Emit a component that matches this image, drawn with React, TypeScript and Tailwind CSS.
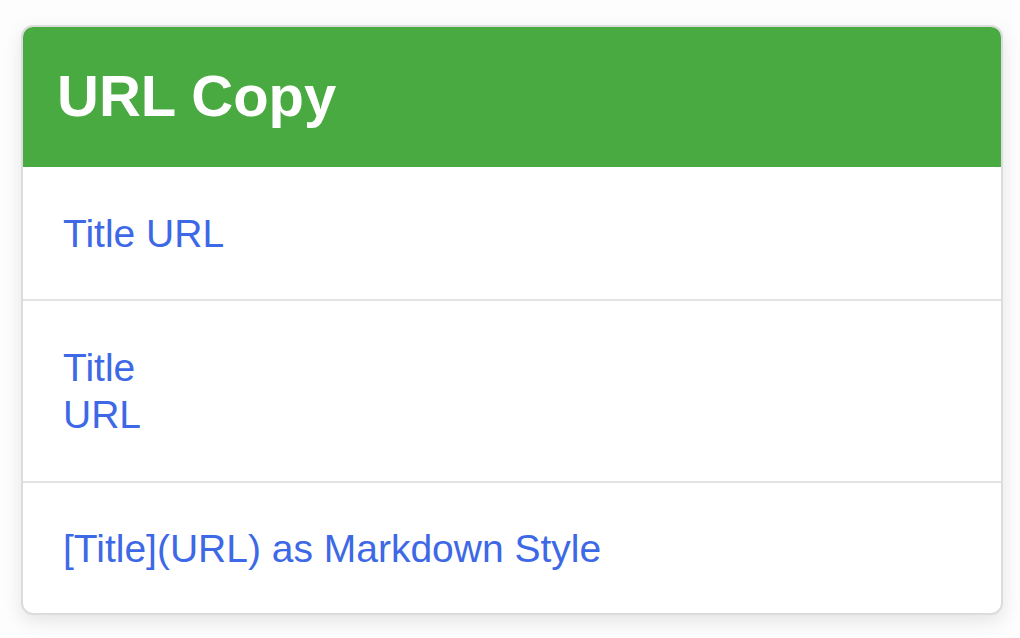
export default function App() {
  const items = [
    { key: "title-url", lines: ["Title URL"], h: "h-[132px]" },
    { key: "title-newline-url", lines: ["Title", "URL"], h: "h-[182px]" },
    { key: "markdown", lines: ["[Title](URL) as Markdown Style"], h: "h-[132px]" },
  ];

  return (
    <div
      className="min-h-screen w-full bg-[#fdfdfd] pt-[25px] pl-[21px]"
      style={{ fontFamily: '"Liberation Sans", Arial, sans-serif' }}
    >
      <div className="w-[982px] rounded-[12px] border-2 border-[#dcdcdc] bg-white shadow-[0_6px_18px_rgba(0,0,0,0.10)] overflow-hidden">
        {/* Header */}
        <div className="h-[140px] bg-[#4aaa42] flex items-center pl-[34px]">
          <h1 className="text-[58px] font-bold text-white leading-none pb-[2px]">URL Copy</h1>
        </div>

        {/* Menu rows */}
        {items.map((item, i) => (
          <div
            key={item.key}
            className={`${item.h} flex items-center pl-[40px] ${i > 0 ? "border-t-2 border-[#e3e3e3]" : ""}`}
          >
            <div className="text-[39px] leading-[47px] text-[#3d68e6]">
              {item.lines.map((l) => (
                <div key={l}>{l}</div>
              ))}
            </div>
          </div>
        ))}
      </div>
    </div>
  );
}
